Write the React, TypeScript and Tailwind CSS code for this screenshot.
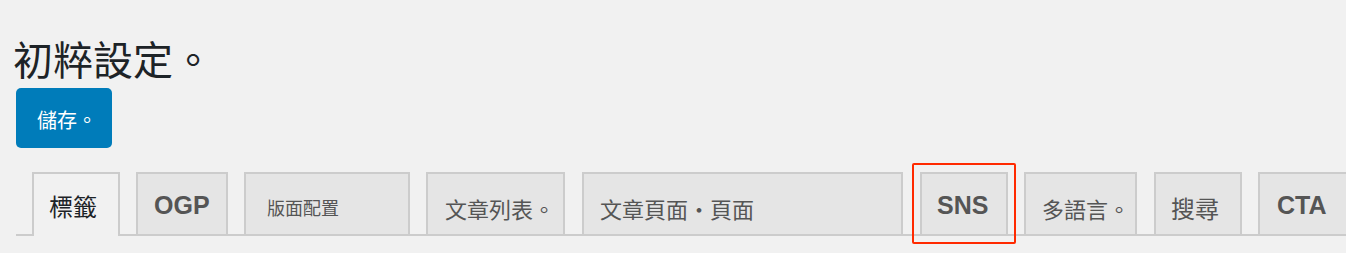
const cjk = "font-['Noto_Sans_CJK_TC','Noto_Sans',sans-serif]";
const latin = "font-['Liberation_Sans',Arial,sans-serif] font-bold";

type Tab = {
  label: string;
  width: string;
  gap: string;
  text: string;
  pad: string;
  latin?: boolean;
  active?: boolean;
  marked?: boolean;
};

const tabs: Tab[] = [
  { label: "標籤", width: "w-[88px]", gap: "ml-[16px]", text: "text-[24px] leading-[24px]", pad: "pt-[20px] pl-[15px]", active: true },
  { label: "OGP", width: "w-[92px]", gap: "ml-[16px]", text: "text-[25px] leading-[25px]", pad: "pt-[19px] pl-[16px]", latin: true },
  { label: "版面配置", width: "w-[166px]", gap: "ml-[16px]", text: "text-[18px] leading-[18px]", pad: "pt-[24px] pl-[21px]" },
  { label: "文章列表。", width: "w-[139px]", gap: "ml-[16px]", text: "text-[22px] leading-[22px]", pad: "pt-[23px] pl-[17px]" },
  { label: "文章頁面・頁面", width: "w-[321px]", gap: "ml-[17px]", text: "text-[22px] leading-[22px]", pad: "pt-[23px] pl-[16px]" },
  { label: "SNS", width: "w-[88px]", gap: "ml-[17px]", text: "text-[25px] leading-[25px]", pad: "pt-[19px] pl-[15px]", latin: true, marked: true },
  { label: "多語言。", width: "w-[113px]", gap: "ml-[16px]", text: "text-[22px] leading-[22px]", pad: "pt-[23px] pl-[16px]" },
  { label: "搜尋", width: "w-[88px]", gap: "ml-[17px]", text: "text-[24px] leading-[24px]", pad: "pt-[22px] pl-[15px]" },
  { label: "CTA", width: "w-[92px]", gap: "ml-[16px]", text: "text-[25px] leading-[25px]", pad: "pt-[19px] pl-[17px]", latin: true },
];

export default function App() {
  return (
    <div className="h-[253px] w-full overflow-hidden bg-[#f1f1f1]">
      <h1
        className={`${cjk} pl-[13px] pt-[38px] text-[40px] leading-[40px] font-normal text-[#1d2327]`}
      >
        初粹設定。
      </h1>

      <button
        className={`${cjk} ml-[16px] mt-[10px] block h-[60px] w-[96px] rounded-[5px] bg-[#007cba] pl-[21px] pt-[3px] text-left text-[20px] leading-[20px] text-white`}
      >
        儲存。
      </button>

      <nav className="ml-[16px] mt-[24px] flex items-end border-b-2 border-[#cccccc]">
        {tabs.map((tab) => (
          <div
            key={tab.label}
            className={`relative shrink-0 border-2 border-b-0 border-[#cccccc] ${tab.gap} ${tab.width} ${tab.pad} ${
              tab.active
                ? "-mb-[2px] h-[64px] bg-[#f1f1f1] text-[#1d2327]"
                : "h-[62px] bg-[#e5e5e5] text-[#555555]"
            }`}
          >
            <span
              className={`block whitespace-nowrap ${tab.latin ? latin : cjk} ${tab.text}`}
            >
              {tab.label}
            </span>
            {tab.marked && (
              <div className="pointer-events-none absolute -left-[10px] -top-[11px] h-[81px] w-[104px] rounded-[2px] border-[2.5px] border-[#ff2a00]" />
            )}
          </div>
        ))}
      </nav>
    </div>
  );
}
